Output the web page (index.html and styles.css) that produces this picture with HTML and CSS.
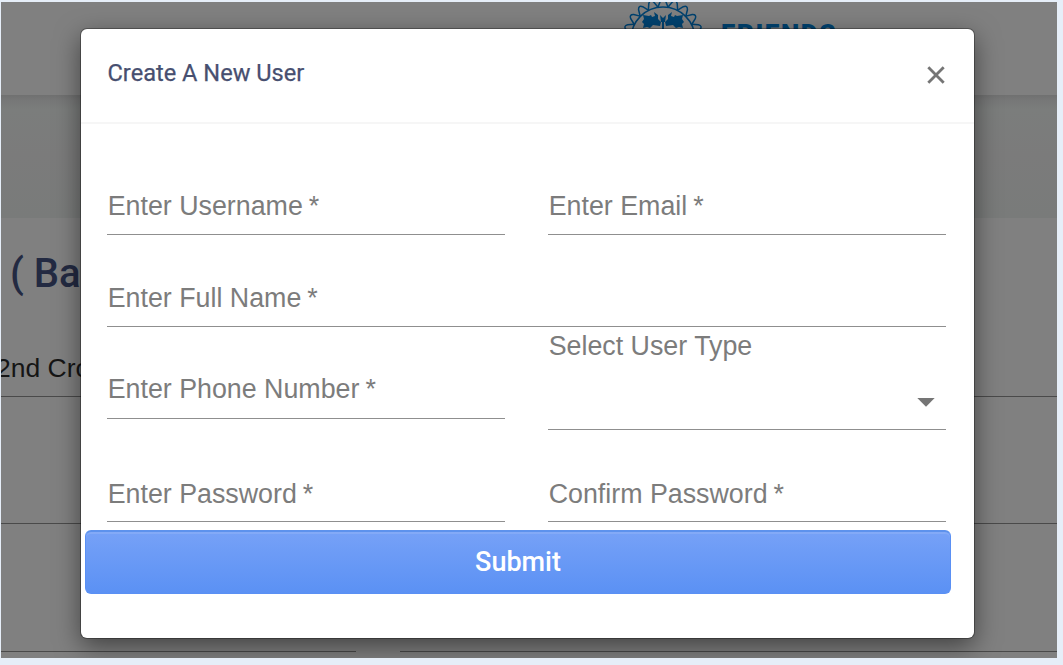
FILE: index.html
```html
<!DOCTYPE html>
<html lang="en">
<head>
<meta charset="utf-8">
<title>Create A New User</title>
<link rel="stylesheet" href="styles.css">
</head>
<body>
<div class="app">
  <header class="topbar">
    <svg class="logo" width="84" height="84" viewBox="-42 -42 84 84" fill="none" stroke="#01426f" stroke-width="1.5">
      <circle r="32"/>
      <g id="petals"></g>
      <path fill="#01426f" stroke="none" d="M-9-27l4 3 0 4 3 3-1 4-7-1-3 3-3-1-4 1 1-4-2-2 2-3-1-4 6 1 2-1 1 2 3-1zM9-27l-4 3 0 4-3 3 1 4 7-1 3 3 3-1 4 1-1-4 2-2-2-3 1-4-6 1-2-1-1 2-3-1zM-1-19h2V12h-2zM-12-8l5-2 6 3v4l-5-2-5 1zM12-8l-5-2-6 3v4l5-2 5 1zM-3-24l3 3 3-3-1 7h-4z"/>
    </svg>
    <span class="brand">FRIENDS</span>
  </header>
  <div class="band"></div>
  <main class="content">
    <h1 class="heading">( Ba</h1>
    <div class="line address">2nd Cro</div>
    <div class="line blank"></div>
    <div class="pair"><div class="line"></div><div class="line"></div></div>
  </main>

  <section class="modal" role="dialog" aria-label="Create A New User">
    <div class="modal-head">
      <h2 class="title">Create A New User</h2>
      <svg class="close" width="18" height="18" viewBox="0 0 18 18"><path d="M1.3 1.3l15.4 15.4M16.7 1.3L1.3 16.7" fill="none" stroke="#757575" stroke-width="2.8"/></svg>
    </div>
    <form class="form">
      <label class="field">Enter Username<i>*</i></label>
      <label class="field">Enter Email<i>*</i></label>
      <label class="field wide">Enter Full Name<i>*</i></label>
      <label class="field phone">Enter Phone Number<i>*</i></label>
      <div class="field select">
        <span>Select User Type</span>
        <svg class="arrow" width="18" height="9" viewBox="0 0 18 9"><path d="M.3 0h17.4L9 8.8z" fill="#757575"/></svg>
      </div>
      <label class="field last">Enter Password<i>*</i></label>
      <label class="field last">Confirm Password<i>*</i></label>
    </form>
    <button class="submit" type="button">Submit</button>
  </section>
</div>
<script src="logo.js"></script>
</body>
</html>
```
FILE: styles.css
```css
* { box-sizing: border-box; }
body {
  margin: 0;
  padding: 2px 6px 7px 1px;
  height: 665px;
  overflow: hidden;
  background: #e6eef8;
  font-family: "Liberation Sans", Arial, sans-serif;
}
.app {
  position: relative;
  height: 656px;
  overflow: hidden;
  background: #808080;
}
.topbar {
  display: flex;
  height: 93px;
  padding-left: 620px;
  background: #808080;
}
.logo { flex: none; margin-top: -5px; }
.brand {
  margin: 17px 0 0 16px;
  font: 900 26px/30px Roboto, sans-serif;
  letter-spacing: 1.6px;
  color: #01426f;
}
.band {
  height: 123px;
  background: linear-gradient(#707070, #767777 5px, #7b7d7c 14px, #7b7b7b 60px, #797b7a);
}
.content { white-space: nowrap; }
.heading {
  margin: 0;
  padding: 31px 0 0 9px;
  height: 122px;
  font: 500 40px/50px Roboto, sans-serif;
  color: #232a42;
}
.line { border-bottom: 1.5px solid #4a4a4a; }
.address {
  height: 57px;
  margin-left: -5px;
  padding-top: 12px;
  font-size: 26.5px;
  line-height: 32px;
  color: #151515;
}
.blank { height: 127px; }
.pair {
  display: grid;
  grid-template-columns: 355px 1fr;
  gap: 44px;
}
.pair .line { height: 128px; }

.modal {
  position: absolute;
  left: 80px;
  top: 27px;
  width: 893px;
  height: 609px;
  border-radius: 6px;
  background: #fff;
  box-shadow: 0 0 0 1px rgba(0, 0, 0, .3), 0 8px 26px rgba(0, 0, 0, .5);
}
.modal-head {
  display: flex;
  justify-content: space-between;
  height: 95px;
  padding: 29px 29px 0 26.5px;
  border-bottom: 2px solid #f6f6f6;
}
.title {
  margin: 0;
  font: 400 23.6px/30px Roboto, sans-serif;
  -webkit-text-stroke: .25px #474f70;
  color: #474f70;
}
.close { margin-top: 8px; }
.form {
  display: grid;
  grid-template-columns: 398px 398px;
  grid-template-rows: 111px 92px 103px 92px;
  column-gap: 43px;
  padding-left: 26px;
}
.field {
  display: flex;
  align-items: flex-end;
  padding: 0 0 12px .7px;
  border-bottom: 1.5px solid #8f8f8f;
  font-size: 26.8px;
  line-height: 32px;
  color: #7c7c7c;
}
.field i { font-style: normal; margin-left: 6px; }
.wide { grid-column: 1 / -1; }
.phone { height: 92px; padding-bottom: 13px; }
.select {
  align-items: flex-start;
  justify-content: space-between;
  padding: 3px 11px 0 .7px;
}
.arrow { margin-top: 68px; }
.last { padding-bottom: 11px; }
.submit {
  display: block;
  width: 866px;
  height: 64px;
  margin: 8px 0 0 4px;
  padding: 0 0 2px;
  border: 1px solid #5a90f4;
  border-top: 2px solid #5d92ed;
  border-radius: 6px;
  background: linear-gradient(#76a1f7, #5b91f4);
  box-shadow: inset 0 2px 0 rgba(255, 255, 255, .1);
  font: 500 27px/32px Roboto, sans-serif;
  color: #fff;
}
```
FILE: logo.js
```js
// Ring of looped petals around the emblem.
const ring = document.getElementById("petals");
for (let angle = 0; angle < 360; angle += 18) {
  const petal = document.createElementNS("http://www.w3.org/2000/svg", "path");
  petal.setAttribute("d", "M-5-32L-2.6-38Q0-42 2.6-38L5-32");
  petal.setAttribute("transform", `rotate(${angle})`);
  ring.appendChild(petal);
}
```
